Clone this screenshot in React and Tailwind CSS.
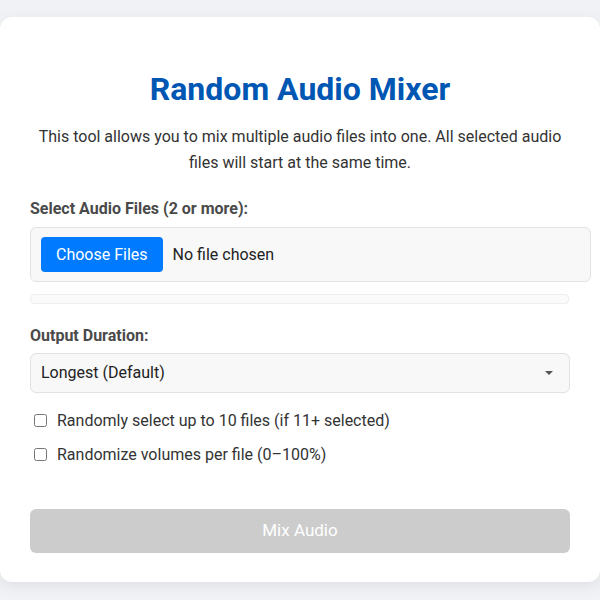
import { useState } from 'react';

function CheckRow({ label, checked, onChange }) {
  return (
    <label className="flex items-center h-[25.6px] cursor-pointer">
      <input
        type="checkbox"
        checked={checked}
        onChange={onChange}
        className="w-[13px] h-[13px] ml-[4px] mr-[10px] accent-[#007bff]"
      />
      <span className="text-[16px] text-[#333]">{label}</span>
    </label>
  );
}

export default function App() {
  const [pickRandom, setPickRandom] = useState(false);
  const [randomVolumes, setRandomVolumes] = useState(false);

  return (
    <div className="min-h-[600px] bg-[#f0f2f5] pt-[17px] font-['Roboto',_'Liberation_Sans',_sans-serif]">
      <div className="w-[600px] bg-white rounded-[12px] shadow-[0_4px_14px_rgba(0,0,0,0.08)] pt-[30px] pb-[29px] px-[30px]">
        <h1 className="mt-[24px] text-center text-[32px] leading-[37px] font-bold text-[#0056b3]">
          Random Audio Mixer
        </h1>
        <p className="mt-[16px] text-center text-[16px] leading-[25.6px] text-[#333]">
          This tool allows you to mix multiple audio files into one. All selected audio files will start at the same time.
        </p>

        {/* File picker */}
        <div className="mt-[24px] text-[16px] leading-[19px] font-bold text-[#4a4a4a]">
          Select Audio Files (2 or more):
        </div>
        <div className="mt-[9px] w-[561px] border border-[#e2e2e2] bg-[#f8f8f8] rounded-[6px] px-[10px] py-[9px] flex items-center">
          <button className="h-[35px] px-[15px] rounded-[4px] bg-[#007bff] text-white text-[16px]">
            Choose Files
          </button>
          <span className="ml-[10px] text-[16px] text-[#222]">No file chosen</span>
        </div>
        <div className="mt-[12px] h-[10px] w-[539px] border border-[#eeeeee] bg-[#fbfbfb] rounded-[4px]" />

        {/* Duration */}
        <div className="mt-[22px] text-[16px] leading-[19px] font-bold text-[#4a4a4a]">
          Output Duration:
        </div>
        <div className="mt-[8px] h-[40px] border border-[#e2e2e2] bg-[#f8f8f8] rounded-[6px] pl-[10px] pr-[16px] flex items-center justify-between">
          <span className="text-[16px] text-[#222]">Longest (Default)</span>
          <span className="w-0 h-0 border-l-[4px] border-r-[4px] border-t-[4px] border-l-transparent border-r-transparent border-t-[#555]" />
        </div>

        {/* Options */}
        <div className="mt-[15px] flex flex-col gap-[8.4px]">
          <CheckRow
            label="Randomly select up to 10 files (if 11+ selected)"
            checked={pickRandom}
            onChange={() => setPickRandom(!pickRandom)}
          />
          <CheckRow
            label="Randomize volumes per file (0–100%)"
            checked={randomVolumes}
            onChange={() => setRandomVolumes(!randomVolumes)}
          />
        </div>

        <button
          disabled
          className="mt-[41px] w-full h-[44px] rounded-[6px] bg-[#cccccc] text-white text-[17px]"
        >
          Mix Audio
        </button>
      </div>
    </div>
  );
}
